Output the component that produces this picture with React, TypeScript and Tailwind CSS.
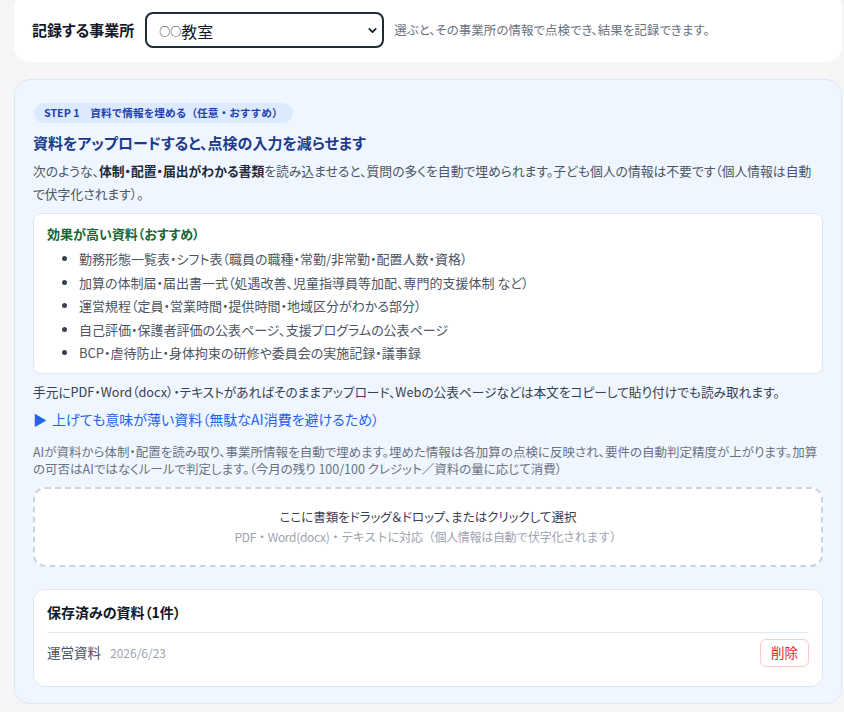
import { ChevronDown } from "lucide-react";

const goodDocs = [
  "勤務形態一覧表・シフト表（職員の職種・常勤/非常勤・配置人数・資格）",
  "加算の体制届・届出書一式（処遇改善、児童指導員等加配、専門的支援体制 など）",
  "運営規程（定員・営業時間・提供時間・地域区分がわかる部分）",
  "自己評価・保護者評価の公表ページ、支援プログラムの公表ページ",
  "BCP・虐待防止・身体拘束の研修や委員会の実施記録・議事録",
];

export default function App() {
  return (
    <div
      className="min-h-[712px] bg-[#f5f5f5] pl-[14px] pr-[2px] pb-[9px] overflow-hidden [font-feature-settings:'palt'] text-[#374151]"
      style={{ fontFamily: '"Noto Sans CJK JP", "Noto Sans", sans-serif' }}
    >
      {/* office select */}
      <div className="-mt-[8px] flex items-center rounded-2xl bg-white pt-[20px] pb-[14px] pl-[18px]">
        <span className="text-[15px] font-bold text-[#111827]">記録する事業所</span>
        <div className="relative ml-[11px] h-[36px] w-[239px] rounded-lg border-2 border-[#1f2937] bg-white">
          <span className="absolute left-[12px] top-[5px] text-[16px] text-[#111827]">
            <span className="text-[11px] align-[2px]">○○</span>教室
          </span>
          <ChevronDown className="absolute right-[3px] top-[10px] h-[13px] w-[13px] text-[#111827]" strokeWidth={3} />
        </div>
        <span className="ml-[10px] text-[12.5px] text-[#6b7280]">選ぶと、その事業所の情報で点検でき、結果を記録できます。</span>
      </div>

      {/* step panel */}
      <div className="mt-[17px] rounded-2xl border border-[#dbe7fb] bg-[#eff6ff] px-[18px] pt-[18px] pb-[16px]">
        <span className="ml-[1px] inline-block rounded-full bg-[#dbeafe] px-[10px] text-[10.7px] font-bold leading-[20px] text-[#1e40af] [font-feature-settings:normal]">
          STEP 1　資料で情報を埋める（任意・おすすめ）
        </span>
        <h2 className="mt-[8px] text-[15px] font-bold leading-[24px] text-[#1e3a8a]">
          資料をアップロードすると、点検の入力を減らせます
        </h2>
        <p className="mt-[4px] text-[12.8px] leading-[23px] text-[#4b5563]">
          次のような、<b className="text-[#1f2937]">体制・配置・届出がわかる書類</b>
          を読み込ませると、質問の多くを自動で埋められます。子ども個人の情報は不要です（個人情報は自動で伏字化されます）。
        </p>

        <div className="mt-[8px] rounded-lg border border-[#e2e8f0] bg-white px-[13px] pt-[10px] pb-[8px]">
          <div className="text-[13px] font-bold leading-[20px] text-[#166534]">効果が高い資料（おすすめ）</div>
          <ul className="mt-[3px] list-disc pl-[32px] text-[13px] leading-[23.5px] text-[#4b5563] marker:text-[#374151]">
            {goodDocs.map((d) => (
              <li key={d}>{d}</li>
            ))}
          </ul>
        </div>

        <p className="mt-[6px] text-[12.7px] leading-[23px] text-[#374151]">
          手元にPDF・Word（docx）・テキストがあればそのままアップロード、Webの公表ページなどは本文をコピーして貼り付けでも読み取れます。
        </p>
        <div className="mt-[4px] flex items-center text-[14px] leading-[24px] text-[#2563eb]">
          <span className="mr-[5px] text-[14px]">▶</span>
          上げても意味が薄い資料（無駄なAI消費を避けるため）
        </div>

        <p className="mt-[12px] text-[12.5px] leading-[17.5px] text-[#6b7280]">
          AIが資料から体制・配置を読み取り、事業所情報を自動で埋めます。埋めた情報は各加算の点検に反映され、要件の自動判定精度が上がります。加算の可否はAIではなくルールで判定します。（今月の残り 100/100 クレジット／資料の量に応じて消費）
        </p>

        <div className="mt-[9px] flex h-[80px] flex-col items-center justify-center rounded-xl border-2 border-dashed border-[#cbd5e1] bg-white">
          <div className="text-[12.5px] leading-[20px] text-[#374151]">ここに書類をドラッグ＆ドロップ、またはクリックして選択</div>
          <div className="text-[12px] leading-[20px] text-[#9ca3af] [font-feature-settings:normal] tracking-[-0.3px]">PDF・Word(docx)・テキストに対応（個人情報は自動で伏字化されます）</div>
        </div>

        <div className="mt-[22px] rounded-xl border border-[#e2e8f0] bg-white px-[13px] pt-[11px] pb-[19px]">
          <div className="pb-[9px] text-[14px] font-bold leading-[22px] text-[#111827]">保存済みの資料（1件）</div>
          <div className="flex items-center justify-between border-t border-[#e5e7eb] pt-[6px]">
            <div className="flex items-baseline">
              <span className="text-[13.5px] text-[#4b5563]">運営資料</span>
              <span className="ml-[9px] text-[12px] text-[#9ca3af]">2026/6/23</span>
            </div>
            <button className="h-[28px] w-[49px] rounded-md border border-[#fecaca] bg-white text-[13.5px] text-[#dc2626]">
              削除
            </button>
          </div>
        </div>
      </div>
    </div>
  );
}
